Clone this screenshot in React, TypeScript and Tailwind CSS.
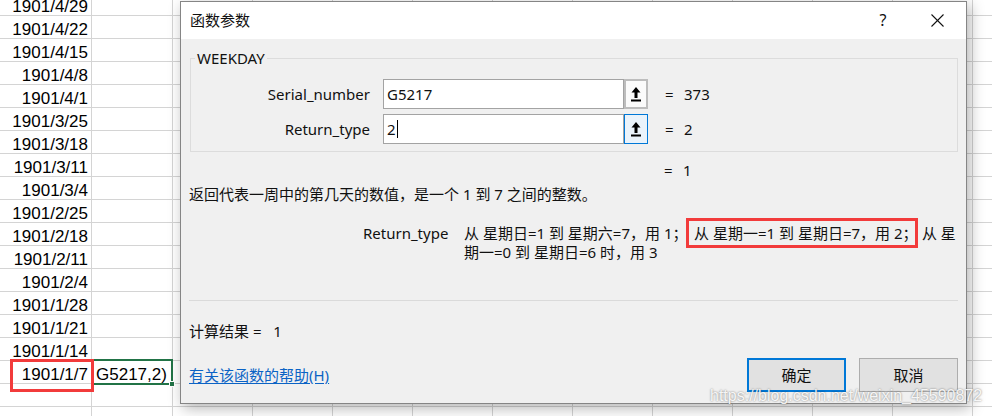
import React from 'react';

const dates = [
  '1901/4/29', '1901/4/22', '1901/4/15', '1901/4/8', '1901/4/1', '1901/3/25',
  '1901/3/18', '1901/3/11', '1901/3/4', '1901/2/25', '1901/2/18', '1901/2/11',
  '1901/2/4', '1901/1/28', '1901/1/21', '1901/1/14', '1901/1/7', '', '',
];

const extraCols = Array.from({ length: 11 });

const RefIcon = () => (
  <svg width="10" height="15" viewBox="0 0 10 15" fill="#000">
    <polygon points="5,0 9.5,5.5 6.5,5.5 6.5,11 3.5,11 3.5,5.5 0.5,5.5" />
    <rect x="0" y="12.5" width="10" height="2" />
  </svg>
);

const ArgRow = ({
  label,
  value,
  result,
  active,
}: {
  label: string;
  value: string;
  result: string;
  active?: boolean;
}) => (
  <div className="flex items-center h-[30px]">
    <div className="w-[179px] text-right pr-0">{label}</div>
    <div className="ml-[13px] flex h-full">
      <div className="w-[241px] h-full bg-white border border-[#a3a3a3] flex items-center pl-[3px]">
        {value}
        {active && <span className="inline-block w-px h-[18px] bg-black ml-px" />}
      </div>
      <div
        className={
          active
            ? 'w-[24px] h-full border border-[#0078d7] bg-[#eaf3fb] flex items-center justify-center'
            : 'w-[24px] h-full border-2 border-[#bdbdbd] bg-[#fbfbfb] flex items-center justify-center'
        }
      >
        <RefIcon />
      </div>
    </div>
    <span className="ml-[17px] w-[19px]">=</span>
    <span>{result}</span>
  </div>
);

// narrow full-width semicolon, as the dialog font draws it
const Semi = () => <span className="[font-feature-settings:'halt']">；</span>;

export default function App() {
  return (
    <div
      className="relative w-[992px] h-[416px] overflow-hidden bg-white"
      style={{ fontFamily: '"Liberation Sans", Arial, sans-serif' }}
    >
      {/* worksheet */}
      <div className="flex flex-col">
        {dates.map((d, i) => (
          <div
            key={i}
            className={
              i === 0
                ? 'flex h-[16px] border-b border-[#d4d4d4] shrink-0'
                : 'flex h-[23px] border-b border-[#d4d4d4] shrink-0'
            }
          >
            <div className="w-[92px] shrink-0 border-r border-[#d4d4d4] flex items-end justify-end pr-[3px] overflow-hidden">
              <span className="text-[17px] leading-[17px] text-black">{d}</span>
            </div>
            <div className="w-[81px] shrink-0 border-r border-[#d4d4d4] flex items-end pl-[4px] overflow-hidden">
              {i === 16 && <span className="text-[17px] leading-[17px] text-black">G5217,2)</span>}
            </div>
            {extraCols.map((_, j) => (
              <div key={j} className="w-[80px] shrink-0 border-r border-[#d4d4d4]" />
            ))}
          </div>
        ))}
      </div>

      {/* active cell */}
      <div className="absolute left-[91px] top-[359px] w-[82px] h-[26px] border-2 border-[#217346]">
        <div className="absolute -right-[4px] -bottom-[4px] w-[6px] h-[6px] bg-[#217346] border border-white" />
      </div>
      {/* red highlight on the date cell */}
      <div className="absolute left-[10px] top-[359px] w-[84px] h-[33px] border-[3px] border-[#f23b3b]" />

      {/* function arguments dialog */}
      <div
        className="absolute left-[180px] top-[1px] w-[787px] h-[403px] border border-[#858585] bg-[#f0f0f0] shadow-[3px_4px_14px_rgba(0,0,0,0.3)] flex flex-col text-[15px] text-[#111]"
        style={{ fontFamily: '"Noto Sans", "Noto Sans CJK SC", sans-serif' }}
      >
        <div className="h-[37px] bg-white flex items-center pl-[9px] pr-[6px] shrink-0">
          <span className="leading-[19px]">函数参数</span>
          <span className="ml-auto mr-[8px] w-[46px] text-center leading-[19px] text-[16px]">?</span>
          <span className="w-[46px] flex justify-center">
            <svg width="13" height="13" viewBox="0 0 13 13" stroke="#111" strokeWidth="1.1">
              <line x1="0.5" y1="0.5" x2="12.5" y2="12.5" />
              <line x1="12.5" y1="0.5" x2="0.5" y2="12.5" />
            </svg>
          </span>
        </div>

        <div className="flex flex-col px-[8px] leading-[19px]">
          <fieldset className="mt-[10px] ml-[1px] w-[768px] border border-[#dcdcdc] pb-[7px]">
            <legend className="ml-[4px] px-[2px] leading-[19px]">WEEKDAY</legend>
            <div className="mt-[11px] flex flex-col gap-[5px]">
              <ArgRow label="Serial_number" value="G5217" result="373" />
              <ArgRow label="Return_type" value="2" result="2" active />
            </div>
          </fieldset>

          <div className="mt-[9px] flex">
            <span className="ml-[475px] w-[19px]">=</span>
            <span>1</span>
          </div>

          <div className="mt-[5px]">返回代表一周中的第几天的数值，是一个 1 到 7 之间的整数。</div>

          <div className="mt-[20px] flex">
            <div className="ml-[174px] w-[101px] shrink-0">Return_type</div>
            <div className="whitespace-nowrap">
              从 星期日=1 到 星期六=7，用 1<Semi />
              <span className="ml-[6px] border-[3px] border-[#f23b3b] px-[5px] py-[2px]">
                从 星期一=1 到 星期日=7，用 2<Semi />
              </span>
              {' '}从 星
              <br />
              期一=0 到 星期日=6 时，用 3
            </div>
          </div>

          <div className="mt-[38px] h-px bg-[#dadada]" />

          <div className="mt-[21px]">计算结果 = &nbsp; 1</div>

          <div className="mt-[17px] flex items-center">
            <span className="text-[#0b63c5] underline underline-offset-2">有关该函数的帮助(H)</span>
            <button className="ml-auto w-[99px] h-[34px] border-2 border-[#0078d7] bg-[#e1e1e1]">确定</button>
            <button className="ml-[13px] w-[99px] h-[34px] border border-[#adadad] bg-[#e1e1e1]">取消</button>
          </div>
        </div>
      </div>

      {/* watermark */}
      <div className="absolute left-[710px] top-[386px] text-[16px] leading-[20px] text-white/90 [text-shadow:0_0_2px_rgba(0,0,0,0.55)]">
        https://blog.csdn.net/weixin_45590872
      </div>
    </div>
  );
}
